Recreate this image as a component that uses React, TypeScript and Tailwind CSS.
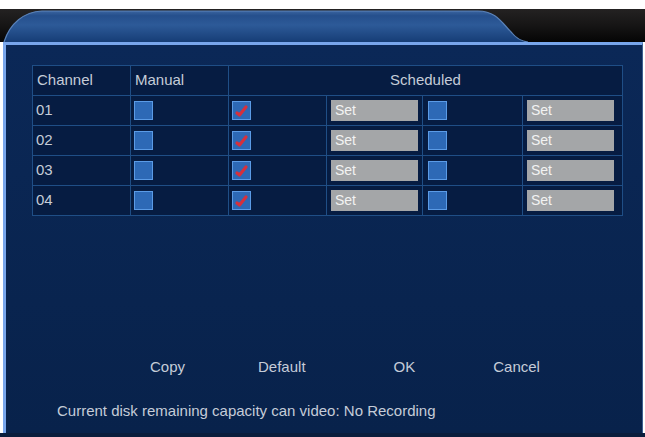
import React from 'react';

const rows = ['01', '02', '03', '04'];

function Box({ checked }: { checked?: boolean }) {
  return (
    <div className="w-[19px] h-[19px] bg-[#2d69b6] border border-[#5b9be6] flex items-center justify-center">
      {checked && (
        <svg width="15" height="15" viewBox="0 0 15 15">
          <path d="M3 10 L5.5 12 L12 4" stroke="#d6303c" strokeWidth="3.2" fill="none" strokeLinecap="round" strokeLinejoin="round" />
        </svg>
      )}
    </div>
  );
}

function SetButton() {
  return (
    <div className="w-[87px] h-[21px] bg-[#a4a6a8] text-[#f2f2f2] text-[14px] leading-[21px] pl-[4px]">Set</div>
  );
}

export default function App() {
  const cell = 'border border-[#1f4e86] p-0 align-middle';
  return (
    <div className="w-[645px] h-[437px] bg-white overflow-hidden flex flex-col" style={{ fontFamily: '"Liberation Sans", Arial, sans-serif' }}>
      {/* Top strip */}
      <div className="h-[9px] bg-white" />

      {/* Tab header */}
      <div className="h-[33px] bg-[#141414] relative">
        <svg width="645" height="33" viewBox="0 0 645 33" className="absolute inset-0">
          <defs>
            <linearGradient id="tabg" x1="0" y1="0" x2="0" y2="1">
              <stop offset="0" stopColor="#3a64a0" />
              <stop offset="0.15" stopColor="#254f8c" />
              <stop offset="0.45" stopColor="#2d5a98" />
              <stop offset="1" stopColor="#163d76" />
            </linearGradient>
            <linearGradient id="darkg" x1="0" y1="0" x2="0" y2="1">
              <stop offset="0" stopColor="#242222" />
              <stop offset="0.5" stopColor="#161515" />
              <stop offset="1" stopColor="#050505" />
            </linearGradient>
          </defs>
          <rect x="0" y="0" width="645" height="33" fill="url(#darkg)" />
          <path d="M4 33 C10 14 24 3 42 2 L478 2 C496 2 502 14 512 24 C516 29 520 32 528 33 Z" fill="url(#tabg)" />
          <path d="M4 33 C10 14 24 3 42 2 L478 2 C496 2 502 14 512 24 C516 29 520 32 528 33" fill="none" stroke="#5a82b8" strokeWidth="1.2" />
        </svg>
      </div>

      {/* Main panel */}
      <div className="h-[391px] ml-[3px] mr-[2px] border-l-[3px] border-t-[3px] border-r border-[#78a6ec] border-r-[#3d5f8f] bg-gradient-to-b from-[#0b2857] to-[#08224b] flex flex-col">
        <table className="mt-[20px] ml-[26px] w-[590px] border-collapse border border-[#2b5a94] bg-[#061c42] text-[#c5ccd8] text-[15px] table-fixed">
          <colgroup>
            <col className="w-[98px]" />
            <col className="w-[98px]" />
            <col className="w-[98px]" />
            <col className="w-[96px]" />
            <col className="w-[100px]" />
            <col className="w-[100px]" />
          </colgroup>
          <thead>
            <tr className="h-[30px]">
              <th className={`${cell} text-left font-normal pl-[4px]`}>Channel</th>
              <th className={`${cell} text-left font-normal pl-[4px]`}>Manual</th>
              <th colSpan={4} className={`${cell} text-center font-normal`}>Scheduled</th>
            </tr>
          </thead>
          <tbody>
            {rows.map((r) => (
              <tr key={r} className="h-[30px]">
                <td className={`${cell} pl-[3px]`}>{r}</td>
                <td className={`${cell} pl-[3px]`}><Box /></td>
                <td className={`${cell} pl-[3px]`}><Box checked /></td>
                <td className={`${cell} pl-[4px]`}><SetButton /></td>
                <td className={`${cell} pl-[5px]`}><Box /></td>
                <td className={`${cell} pl-[4px]`}><SetButton /></td>
              </tr>
            ))}
          </tbody>
        </table>

        <div className="mt-[141px] flex text-[#c5ccd8] text-[15px] h-[20px] items-center">
          <span className="ml-[144px]">Copy</span>
          <span className="ml-[73px]">Default</span>
          <span className="ml-[88px]">OK</span>
          <span className="ml-[78px]">Cancel</span>
        </div>

        <div className="mt-[23px] ml-[51px] text-[#c5ccd8] text-[15px]">
          Current disk remaining capacity can video: No Recording
        </div>
      </div>
      <div className="flex-1 bg-[#0a1d3c]" />
    </div>
  );
}
